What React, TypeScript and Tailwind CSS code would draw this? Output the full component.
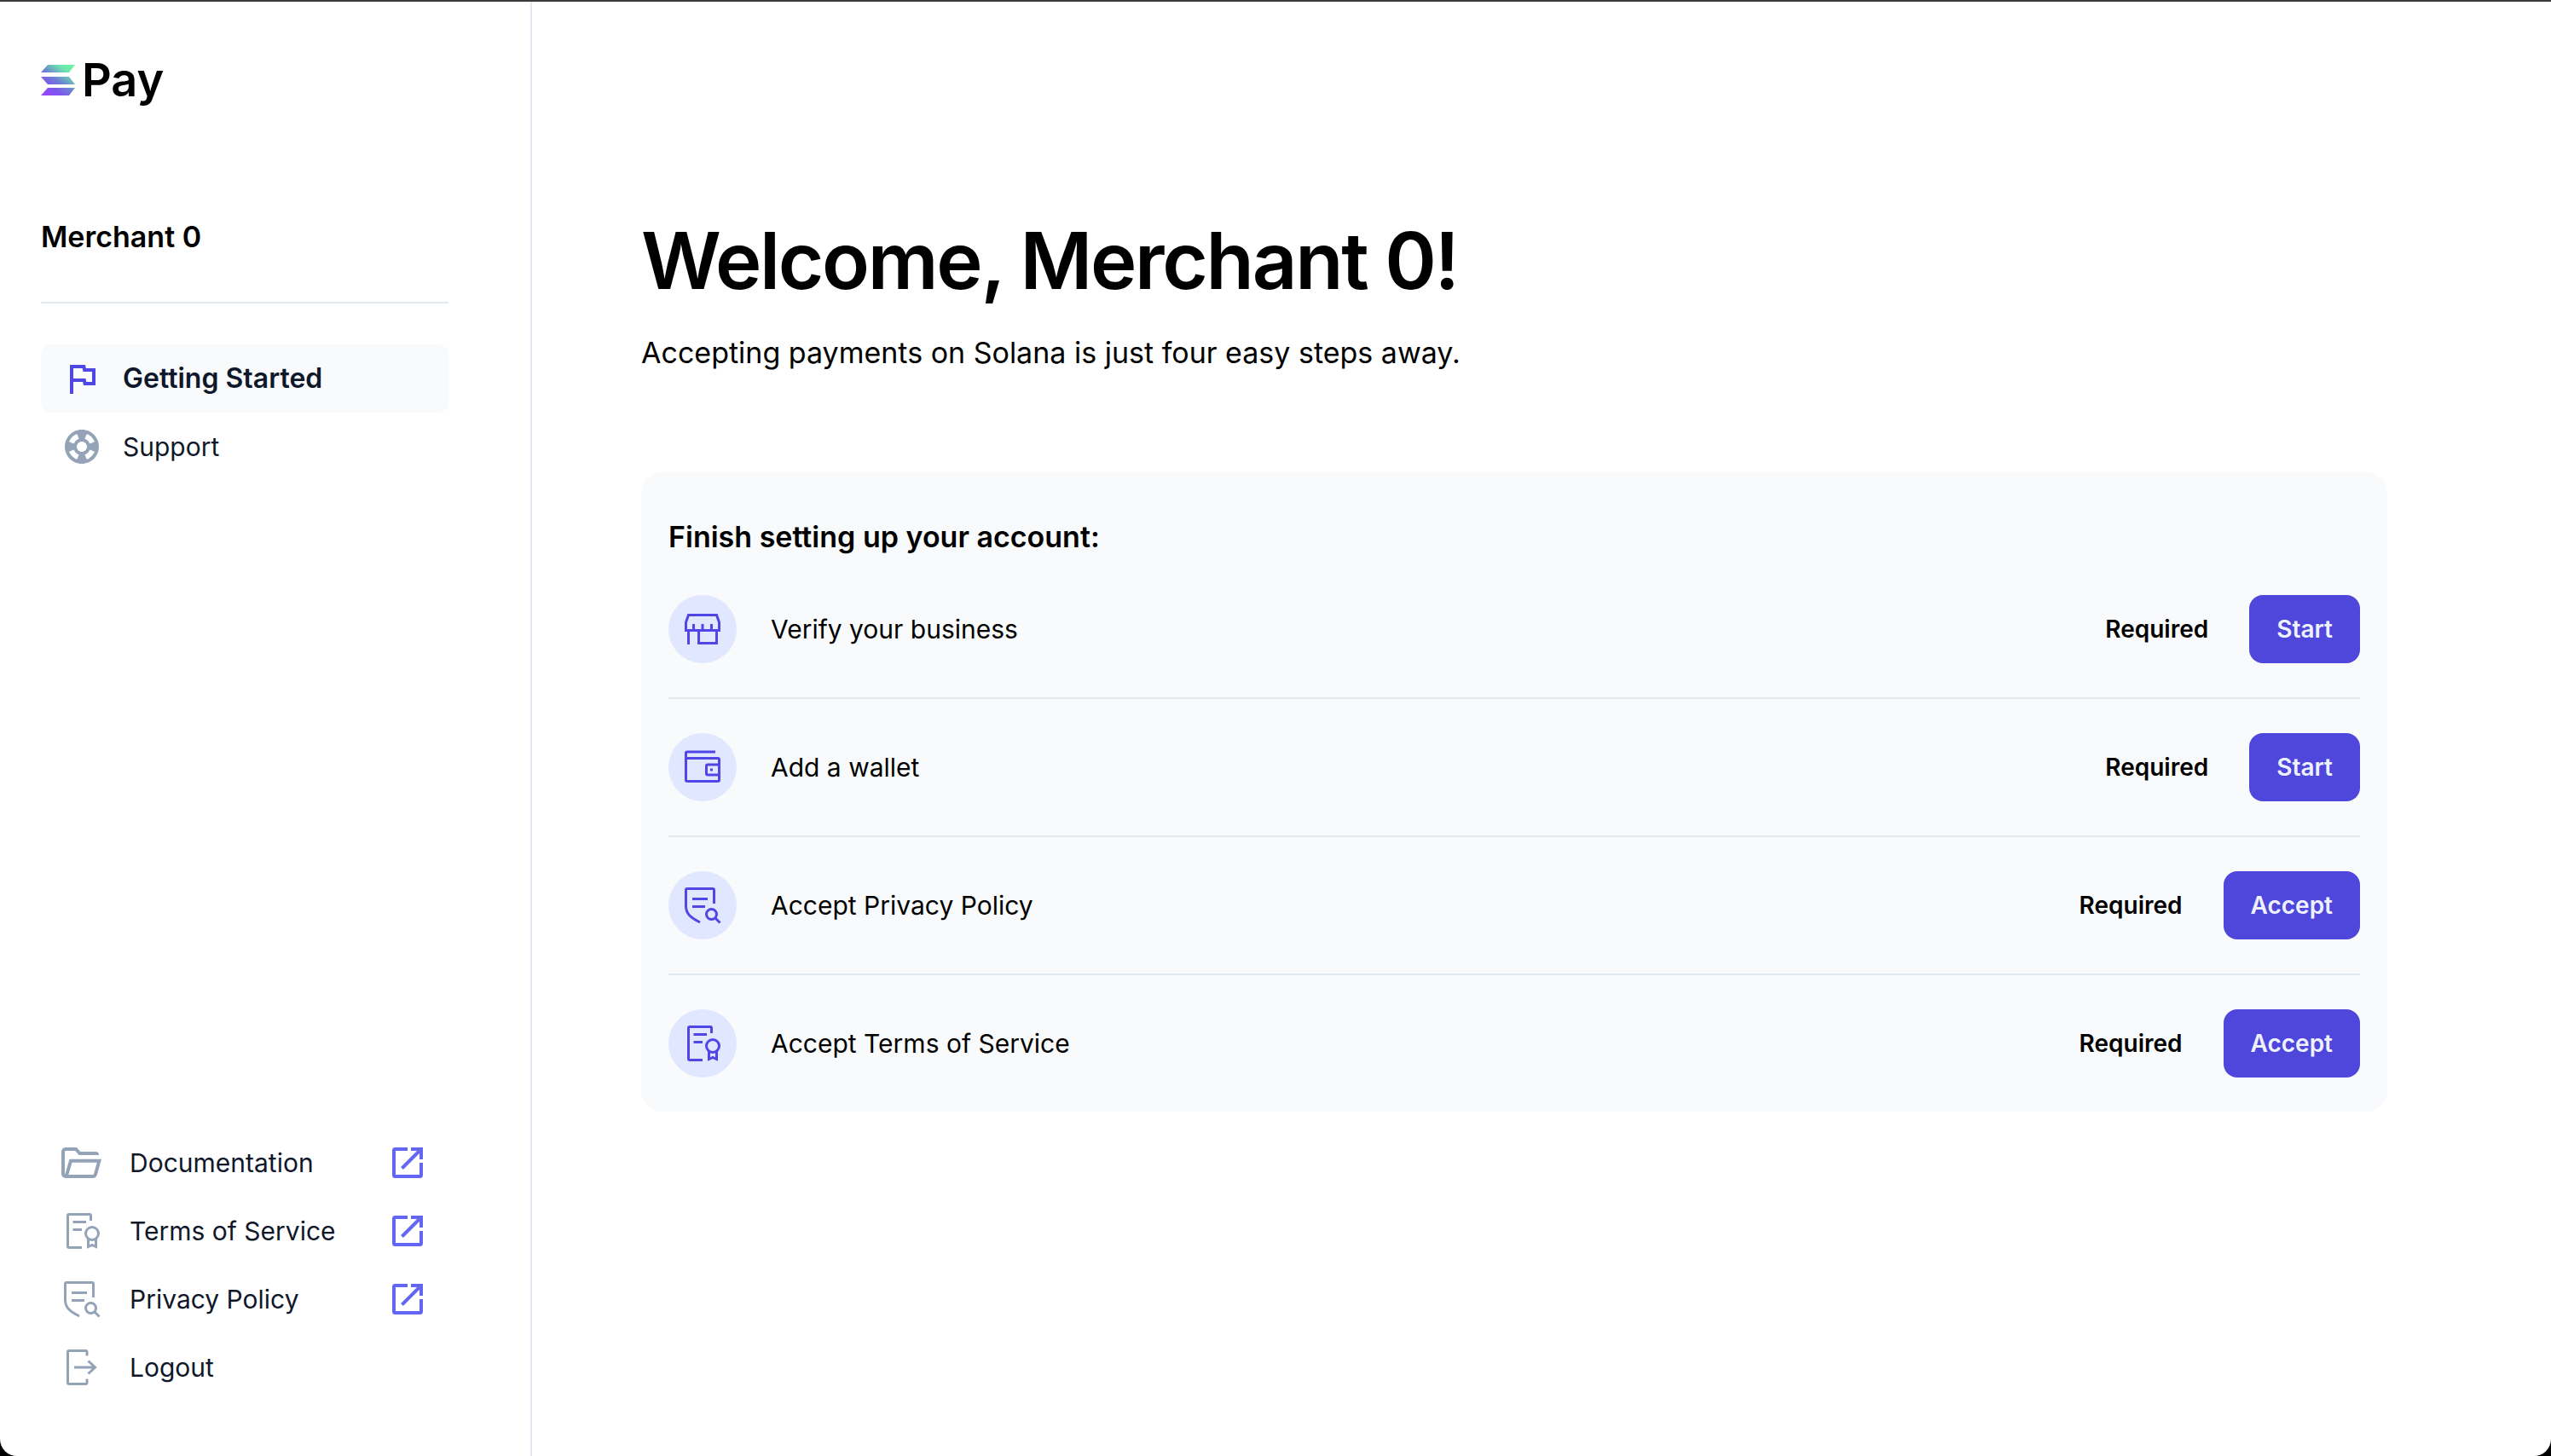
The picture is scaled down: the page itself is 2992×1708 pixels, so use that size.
import type { ReactNode } from "react";

type IconProps = { className?: string };

function SolanaMark() {
  return (
    <svg width="40" height="36" viewBox="0 0 40 36" aria-hidden="true">
      <defs>
        <linearGradient id="mark" gradientUnits="userSpaceOnUse" x1="36" y1="0" x2="8" y2="38">
          <stop offset="0" stopColor="#6df5a2" />
          <stop offset="0.2" stopColor="#6ee4b0" />
          <stop offset="0.5" stopColor="#6a86d0" />
          <stop offset="0.75" stopColor="#7f55ee" />
          <stop offset="1" stopColor="#9547fa" />
        </linearGradient>
      </defs>
      <g fill="url(#mark)">
        <path d="M8 0H40L33 9H0Z" />
        <path d="M0 14H33L40 23H8Z" />
        <path d="M8 27H40L33 36H0Z" />
      </g>
    </svg>
  );
}

function FlagIcon() {
  return (
    <svg className="size-12 text-[#4f46e5]" viewBox="0 0 24 24" fill="currentColor" aria-hidden="true">
      <path d="M12.36 6l.4 2H18v6h-3.36l-.4-2H7V6h5.36M14 4H5v17h2v-7h5.6l.4 2h7V6h-5.6L14 4z" />
    </svg>
  );
}

function SupportIcon() {
  return (
    <svg className="size-12 text-[#94a3b8]" viewBox="0 0 24 24" fill="currentColor" aria-hidden="true">
      <path d="M12,2C6.48,2,2,6.48,2,12c0,5.52,4.48,10,10,10s10-4.48,10-10C22,6.48,17.52,2,12,2z M19.46,9.12l-2.78,1.15c-0.51-1.36-1.58-2.44-2.95-2.94l1.15-2.78C16.98,5.35,18.65,7.02,19.46,9.12z M12,15c-1.66,0-3-1.34-3-3s1.34-3,3-3s3,1.34,3,3S13.66,15,12,15z M9.13,4.54l1.17,2.78c-1.38,0.5-2.47,1.59-2.98,2.97L4.54,9.13C5.35,7.02,7.02,5.35,9.13,4.54z M4.54,14.87l2.78-1.15c0.51,1.38,1.59,2.46,2.97,2.96l-1.17,2.78C7.02,18.65,5.35,16.98,4.54,14.87z M14.88,19.46l-1.15-2.78c1.37-0.51,2.45-1.59,2.95-2.97l2.78,1.17C18.65,16.98,16.98,18.65,14.88,19.46z" />
    </svg>
  );
}

function StrokeIcon({ className, width = 3, children }: IconProps & { width?: number; children: ReactNode }) {
  return (
    <svg
      className={className}
      viewBox="0 0 48 48"
      fill="none"
      stroke="currentColor"
      strokeWidth={width}
      aria-hidden="true"
    >
      {children}
    </svg>
  );
}

function FolderIcon({ className }: IconProps) {
  return (
    <StrokeIcon className={className} width={4}>
      <path d="M42 15A2 2 0 0 0 40 13H21.500L17 8H5A3 3 0 0 0 2 11V37A3 3 0 0 0 5 40H37A3 3 0 0 0 39.900 37.800L44.400 21.700H11L6 39" />
    </StrokeIcon>
  );
}

function TermsIcon({ className }: IconProps) {
  return (
    <StrokeIcon className={className}>
      <path d="M34.500 12V6A1.500 1.500 0 0 0 33 4.500H9A1.500 1.500 0 0 0 7.500 6V42A1.500 1.500 0 0 0 9 43.500H24M13.500 13.500H29M13.500 22.500H24" />
      <circle cx="36" cy="27" r="7.500" />
      <path d="M31.500 33V42.500L36 40.500L40.500 42.500V33" />
    </StrokeIcon>
  );
}

function PolicyIcon({ className }: IconProps) {
  return (
    <StrokeIcon className={className}>
      <path d="M37.500 22V6A1.500 1.500 0 0 0 36 4.500H6A1.500 1.500 0 0 0 4.500 6V25C4.500 34 10 38.500 21 44M12 16.500H30M12 25.500H27" />
      <circle cx="34.500" cy="34.500" r="6" />
      <path d="M39 39L44.500 44.500" />
    </StrokeIcon>
  );
}

function LogoutIcon({ className }: IconProps) {
  return (
    <StrokeIcon className={className}>
      <path d="M30 10.500V6A1.500 1.500 0 0 0 28.500 4.500H9A1.500 1.500 0 0 0 7.500 6V42A1.500 1.500 0 0 0 9 43.500H28.500A1.500 1.500 0 0 0 30 42V37.500M15 24H39M31.500 16.500L39.500 24L31.500 31.500" />
    </StrokeIcon>
  );
}

function StoreIcon({ className }: IconProps) {
  return (
    <StrokeIcon className={className}>
      <path d="M7.500 7.500H40.500L43.500 16V25.500H4.500V16ZM13.500 18V25.500M24 18V25.500M34.500 18V25.500M7.500 25.500V42M19.500 25.500V40.500H40.500V25.500" />
    </StrokeIcon>
  );
}

function WalletIcon({ className }: IconProps) {
  return (
    <StrokeIcon className={className}>
      <path d="M39 6H6A1.500 1.500 0 0 0 4.500 7.500V39A1.500 1.500 0 0 0 6 40.500H42A1.500 1.500 0 0 0 43.500 39V15A1.500 1.500 0 0 0 42 13.500H4.500M43.500 21H30A1.500 1.500 0 0 0 28.500 22.500V31.500A1.500 1.500 0 0 0 30 33H43.500" />
      <path d="M33 27H36" />
    </StrokeIcon>
  );
}

function ExternalIcon() {
  return (
    <StrokeIcon className="size-12 text-[#6366f1]" width={4}>
      <path d="M24 8H9.500A1.500 1.500 0 0 0 8 9.500V38.500A1.500 1.500 0 0 0 9.500 40H38.500A1.500 1.500 0 0 0 40 38.500V24M28 8H40V20M40 8L17.500 30.500" />
    </StrokeIcon>
  );
}

const footerLinks = [
  { label: "Documentation", Icon: FolderIcon },
  { label: "Terms of Service", Icon: TermsIcon },
  { label: "Privacy Policy", Icon: PolicyIcon },
];

const steps = [
  { label: "Verify your business", Icon: StoreIcon, action: "Start" },
  { label: "Add a wallet", Icon: WalletIcon, action: "Start" },
  { label: "Accept Privacy Policy", Icon: PolicyIcon, action: "Accept" },
  { label: "Accept Terms of Service", Icon: TermsIcon, action: "Accept" },
];

function Sidebar() {
  return (
    <aside className="flex w-[624px] shrink-0 flex-col border-r-2 border-[#e2e8f0] pr-24 pb-16 pl-12">
      <a href="#" aria-label="Solana Pay" className="mt-13 flex h-20 items-center gap-2">
        <SolanaMark />
        <span className="text-[54px] leading-[56px] font-semibold">Pay</span>
      </a>
      <div className="mt-24 border-b-2 border-[#e2e8f0] pt-5 pb-12 text-[34px] leading-[56px] font-semibold">
        Merchant 0
      </div>
      <nav aria-label="Main" className="mt-12 flex flex-col text-[#0f172a]">
        <a
          href="#"
          aria-current="page"
          className="flex h-20 items-center gap-6 rounded-xl bg-[#f8fafc] px-6 text-[32px] leading-[48px] font-semibold"
        >
          <FlagIcon />
          Getting Started
        </a>
        <a href="#" className="flex h-20 items-center gap-6 rounded-xl px-6 text-[30px] leading-[48px]">
          <SupportIcon />
          Support
        </a>
      </nav>
      <div className="mt-auto flex flex-col text-[30px] leading-[48px] text-[#0f172a]">
        {footerLinks.map(({ label, Icon }) => (
          <a key={label} href="#" className="flex h-20 items-center gap-8 px-6">
            <Icon className="size-12 shrink-0 text-[#94a3b8]" />
            <span className="flex-1">{label}</span>
            <ExternalIcon />
          </a>
        ))}
        <button type="button" className="flex h-20 items-center gap-8 px-6 text-left">
          <LogoutIcon className="size-12 shrink-0 text-[#94a3b8]" />
          Logout
        </button>
      </div>
    </aside>
  );
}

export default function App() {
  return (
    <div className="flex min-h-screen flex-col bg-black font-['Inter',sans-serif] text-black">
      <div className="flex flex-1 rounded-b-[20px] border-t-2 border-[#3c3a3b] bg-white">
        <Sidebar />
        <main className="min-w-0 flex-1 pt-64 pr-48 pl-32">
          <h1 className="text-[92px] leading-[96px] font-semibold tracking-tight">Welcome, Merchant 0!</h1>
          <p className="mt-8 text-[34px] leading-[56px]">Accepting payments on Solana is just four easy steps away.</p>
          <section className="mt-28 rounded-3xl bg-[#f8fafc] px-8 pt-12">
            <h2 className="text-[34px] leading-[56px] font-semibold">Finish setting up your account:</h2>
            <ul className="divide-y-2 divide-[#e2e8f0]">
              {steps.map(({ label, Icon, action }) => (
                <li key={label} className="flex items-center py-10">
                  <span className="flex size-20 items-center justify-center rounded-full bg-[#e0e7ff] text-[#4f46e5]">
                    <Icon className="size-12" />
                  </span>
                  <span className="ml-10 flex-1 text-[30px] leading-[48px]">{label}</span>
                  <span className="text-[28px] leading-[40px] font-semibold">Required</span>
                  <button
                    type="button"
                    className="ml-12 h-20 rounded-2xl bg-[#4f46dc] px-8 text-[28px] leading-[40px] font-semibold text-[#eef2ff]"
                  >
                    {action}
                  </button>
                </li>
              ))}
            </ul>
          </section>
        </main>
      </div>
    </div>
  );
}
